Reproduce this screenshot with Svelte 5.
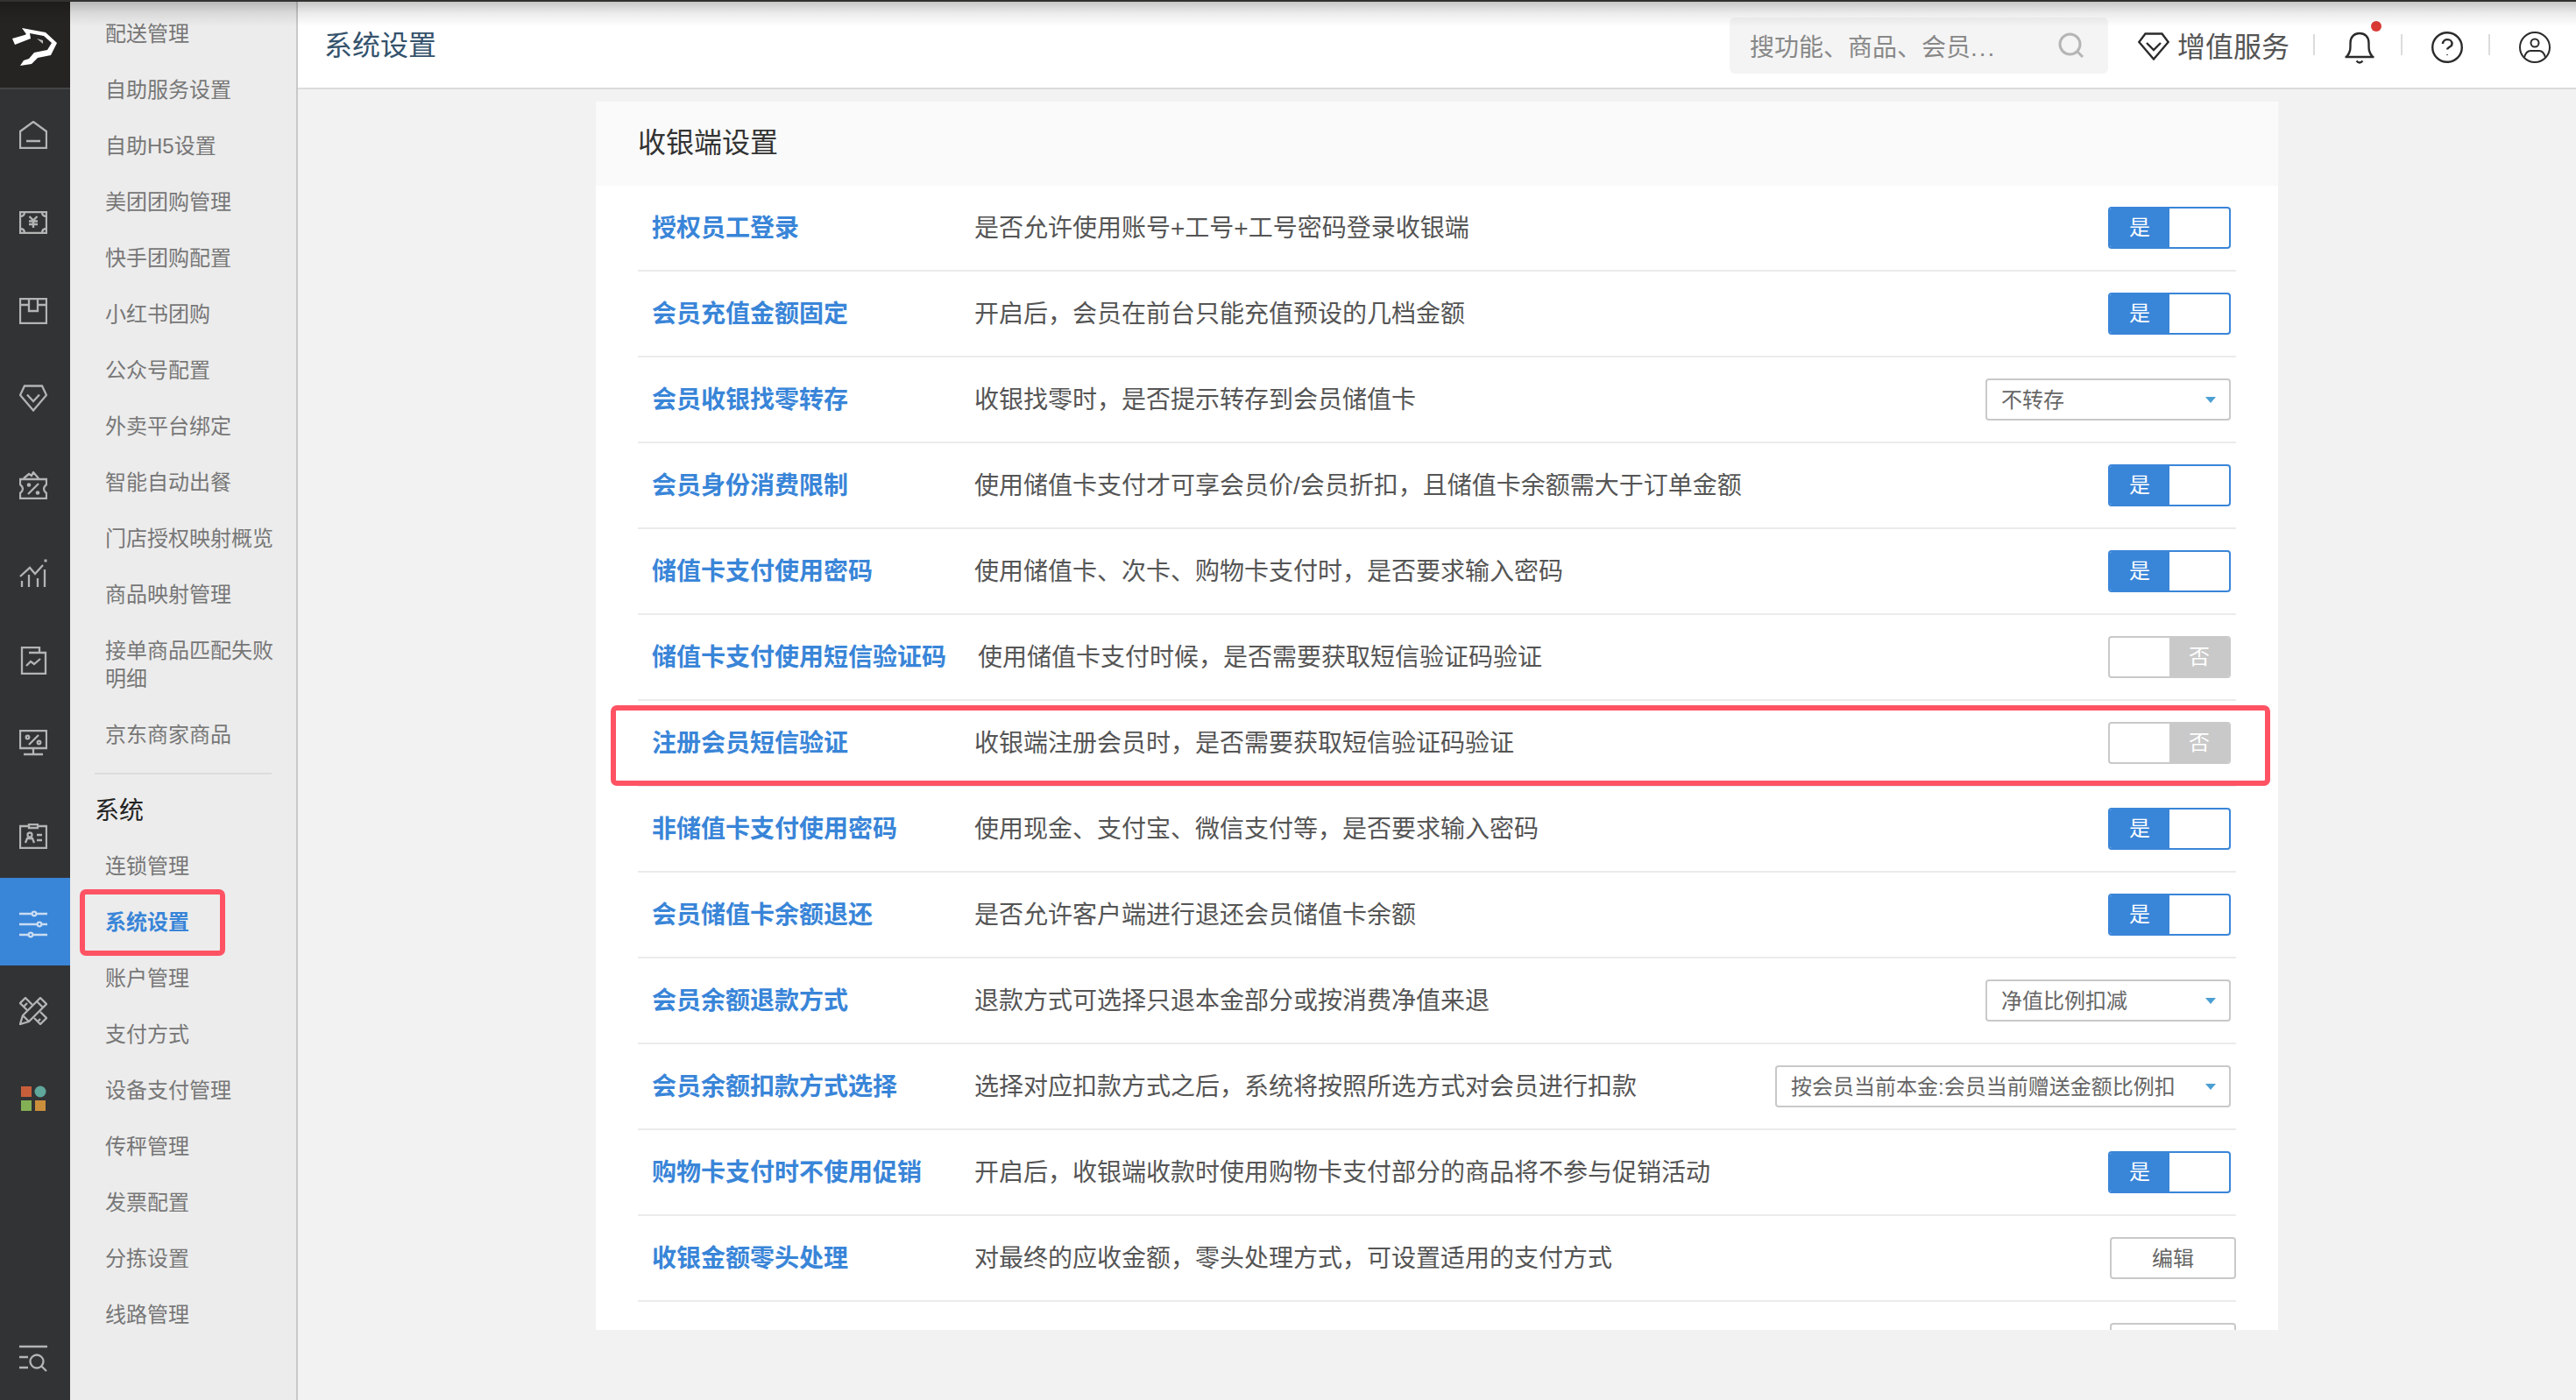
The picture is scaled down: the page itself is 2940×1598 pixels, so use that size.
<script lang="ts">
  type Row = {
    title: string;
    desc: string;
    type: "switch" | "select" | "button";
    on?: boolean;
    value?: string;
    wide?: boolean;
    marked?: boolean;
  };

  let menuTop = [
    "配送管理",
    "自助服务设置",
    "自助H5设置",
    "美团团购管理",
    "快手团购配置",
    "小红书团购",
    "公众号配置",
    "外卖平台绑定",
    "智能自动出餐",
    "门店授权映射概览",
    "商品映射管理",
    "接单商品匹配失败明细",
    "京东商家商品",
  ];

  let menuSystem = [
    "连锁管理",
    "系统设置",
    "账户管理",
    "支付方式",
    "设备支付管理",
    "传秤管理",
    "发票配置",
    "分拣设置",
    "线路管理",
  ];

  let active = "系统设置";

  let rows: Row[] = [
    { title: "授权员工登录", desc: "是否允许使用账号+工号+工号密码登录收银端", type: "switch", on: true },
    { title: "会员充值金额固定", desc: "开启后，会员在前台只能充值预设的几档金额", type: "switch", on: true },
    { title: "会员收银找零转存", desc: "收银找零时，是否提示转存到会员储值卡", type: "select", value: "不转存" },
    { title: "会员身份消费限制", desc: "使用储值卡支付才可享会员价/会员折扣，且储值卡余额需大于订单金额", type: "switch", on: true },
    { title: "储值卡支付使用密码", desc: "使用储值卡、次卡、购物卡支付时，是否要求输入密码", type: "switch", on: true },
    { title: "储值卡支付使用短信验证码", desc: "使用储值卡支付时候，是否需要获取短信验证码验证", type: "switch", on: false },
    { title: "注册会员短信验证", desc: "收银端注册会员时，是否需要获取短信验证码验证", type: "switch", on: false, marked: true },
    { title: "非储值卡支付使用密码", desc: "使用现金、支付宝、微信支付等，是否要求输入密码", type: "switch", on: true },
    { title: "会员储值卡余额退还", desc: "是否允许客户端进行退还会员储值卡余额", type: "switch", on: true },
    { title: "会员余额退款方式", desc: "退款方式可选择只退本金部分或按消费净值来退", type: "select", value: "净值比例扣减" },
    { title: "会员余额扣款方式选择", desc: "选择对应扣款方式之后，系统将按照所选方式对会员进行扣款", type: "select", value: "按会员当前本金:会员当前赠送金额比例扣", wide: true },
    { title: "购物卡支付时不使用促销", desc: "开启后，收银端收款时使用购物卡支付部分的商品将不参与促销活动", type: "switch", on: true },
    { title: "收银金额零头处理", desc: "对最终的应收金额，零头处理方式，可设置适用的支付方式", type: "button", value: "编辑" },
    { title: "", desc: "", type: "button", value: "" },
  ];

  function toggle(i: number) {
    rows[i].on = !rows[i].on;
    rows = rows;
  }
</script>

<div class="page">
  <nav class="rail">
    <div class="logo">
      <svg width="52" height="44" viewBox="0 0 52 44">
        <path
          d="M0 12 L14 8 L16 7 L11 0 L38 5 L51 17 L44 31 L29 34 L22 41 L9 43 L13 37 L19 35 L25 28 L40 25 L45 17 L36 9 L20 6 L21 12 L3 19 Z"
          fill="#fff"
        />
        <path d="M28 12 L35 14 L35 18 Z" fill="#bbb" />
      </svg>
    </div>
    <div class="icons">
      <svg width="32" height="32" viewBox="0 0 32 32" style:margin-top="36px">
        <path d="M1 12 L16 1 L31 12 V31 H1 Z M8 23 H24" />
      </svg>
      <svg width="32" height="26" viewBox="0 0 32 26" style:margin-top="71px">
        <path d="M1 1 H31 V25 H1 Z M1 6 Q6 6 6 1 M26 1 Q26 6 31 6 M1 20 Q6 20 6 25 M26 25 Q26 20 31 20" />
        <path d="M11.500 6 L16 10.500 L20.500 6 M16 10.500 V19 M11 11.500 H21 M11 15 H21" />
      </svg>
      <svg width="32" height="30" viewBox="0 0 32 30" style:margin-top="73px">
        <path d="M1 1 H31 V29 H1 Z M1 8 H11 M21 8 H31 M11 1 V15 H21 V1" />
      </svg>
      <svg width="32" height="31" viewBox="0 0 32 31" style:margin-top="69px">
        <path d="M6 1.500 H26 L31 12 L16 29.500 L1 12 Z M9 11.500 L16 19 L23 11.500" />
      </svg>
      <svg width="32" height="32" viewBox="0 0 32 32" style:margin-top="68px">
        <path d="M1 9 H31 V15 Q25 20 31 25 V31 H1 V25 Q7 20 1 15 Z M5 8 L11 3 L14 5 L16 1 L22 8 M10 26 L22 14" />
        <circle cx="11" cy="15.5" r="1.2" />
        <circle cx="21" cy="24.5" r="1.2" />
      </svg>
      <svg width="32" height="32" viewBox="0 0 32 32" style:margin-top="68px">
        <path d="M1 20 L12 10 L18 17 L27 7 M3 32 V25 M11 32 V18 M21 32 V22 M29 32 V12" />
        <rect x="28.5" y="0.5" width="3" height="3" fill="#b3b4b4" stroke="none" />
      </svg>
      <svg width="32" height="32" viewBox="0 0 32 32" style:margin-top="68px">
        <path d="M3 1 H23 V7 H30 V31 H3 Z M11 7 H24 M8 22 L13 17 L17 20 L24 14" />
      </svg>
      <svg width="32" height="30" viewBox="0 0 32 30" style:margin-top="63px">
        <path d="M1 1 H31 V21 H1 Z M16 21 V27 M5 28 H27 M11 17 L22 6" />
        <circle cx="9.5" cy="8.5" r="1.8" />
        <circle cx="22.5" cy="14.500" r="1.8" />
      </svg>
      <svg width="32" height="29" viewBox="0 0 32 29" style:margin-top="77px">
        <path d="M11 3 H1 V28 H31 V3 H21 M11 1 H21 V5 H11 Z M20 13 H26 M20 19 H26" />
        <circle cx="12" cy="13" r="2.5" />
        <path d="M7 22 L9 17 H15 L17 22" />
      </svg>
      <div class="current">
        <svg width="32" height="32" viewBox="0 0 32 32">
          <path d="M0 4 H14 M20 4 H32 M0 16 H20 M26 16 H32 M0 28 H10 M16 28 H32" />
          <circle cx="17" cy="4" r="2.3" />
          <circle cx="23" cy="16" r="2.3" />
          <circle cx="13" cy="28" r="2.3" />
        </svg>
      </div>
      <svg width="32" height="32" viewBox="0 0 32 32" style:margin-top="36px">
        <path d="M1 31 L4 21 L24 1 L31 8 L11 28 Z M20 5 L27 12 M4 21 L11 28" />
        <path d="M9 15 L1 7 L7 1 L15 9 M5 11 L9 7 M17 24 L24 31 L31 24 L24 17 M21 28 L24 25" />
      </svg>
      <svg class="apps" width="32" height="32" viewBox="0 0 32 32" style:margin-top="68px">
        <rect x="2" y="2" width="12" height="12" fill="#c95f3a" />
        <circle cx="24" cy="8" r="6.5" fill="#5fa89b" />
        <rect x="2" y="18" width="12" height="12" fill="#84b055" />
        <rect x="18" y="18" width="12" height="12" fill="#cb8f3c" />
      </svg>
    </div>
    <svg class="find" width="32" height="32" viewBox="0 0 32 32">
      <path d="M0 3 H32 M0 15 H10 M0 27 H10 M25 25 L31 31" />
      <circle cx="20" cy="20" r="7.5" />
    </svg>
  </nav>

  <aside class="menu">
    {#each menuTop as item}
      <div class="item">{item}</div>
    {/each}
    <div class="line"></div>
    <div class="group">系统</div>
    {#each menuSystem as item}
      <div class="item" class:active={item === active}>{item}</div>
    {/each}
  </aside>

  <div class="main">
    <header>
      <div class="crumb">系统设置</div>
      <div class="search">
        <span>搜功能、商品、会员<span class="dots">...</span></span>
        <svg width="32" height="32" viewBox="0 0 32 32">
          <circle cx="14.5" cy="14.5" r="11.5" />
          <path d="M23 23 L29 29" />
        </svg>
      </div>
      <div class="service">
        <svg width="36" height="32" viewBox="0 0 36 32">
          <path d="M8.5 1.5 H27.500 L34.700 11 L18 30.500 L1.300 11 Z M10 12 L18 20 L26 12" />
        </svg>
        <span>增值服务</span>
      </div>
      <div class="tool bell">
        <svg width="36" height="38" viewBox="0 0 36 38">
          <path d="M1.500 30 H34.500 M3.500 29.500 C8 24 7.500 20 7.500 14 C7.500 7 12 3 18 3 C24 3 28.500 7 28.500 14 C28.500 20 28 24 32.500 29.500 M14.500 34.500 Q18 38.500 21.500 34.500" />
        </svg>
        <i></i>
      </div>
      <div class="tool">
        <svg width="36" height="36" viewBox="0 0 36 36">
          <circle cx="18" cy="18" r="16.800" />
          <path d="M13 14 C13 7.500 23.500 7.500 23.500 14 C23.500 18 18.200 17.500 18 20.500" />
          <circle class="dot" cx="18" cy="26.500" r="0.8" />
        </svg>
      </div>
      <div class="tool user">
        <svg width="36" height="36" viewBox="0 0 36 36">
          <circle cx="18" cy="18" r="17" />
          <circle cx="18" cy="13" r="4.500" />
          <path d="M6 29.500 C7.500 24 10 22 13 22 H23 C26 22 28.500 24 30 29.500" />
        </svg>
      </div>
    </header>

    <section class="panel">
      <h3>收银端设置</h3>
      <div class="rows">
        {#each rows as row, i}
          <div class="row" class:marked={row.marked}>
            <span class="title">{row.title}</span>
            <span class="desc">{row.desc}</span>
            {#if row.type === "switch"}
              <button class="switch" class:off={!row.on} on:click={() => toggle(i)}>
                <span>{row.on ? "是" : "否"}</span>
              </button>
            {:else if row.type === "select"}
              <div class="select" class:wide={row.wide}>
                <span>{row.value}</span>
                <i></i>
              </div>
            {:else}
              <button class="edit">{row.value}</button>
            {/if}
          </div>
        {/each}
      </div>
    </section>
  </div>
  <div class="shade"></div>
</div>

<style>
  :global(body) {
    background: #f2f2f2;
  }
  .page {
    position: relative;
    display: flex;
    width: 100%;
    height: 100vh;
    overflow: hidden;
    background: #f2f2f2;
    color: #555;
    font-family: "Liberation Sans", "Noto Sans CJK SC", sans-serif;
    font-size: 28px;
  }
  svg {
    display: block;
    flex: none;
    fill: none;
    stroke: #b3b4b4;
    stroke-width: 2.3;
  }
  /* browser edge and the shadow it throws on the page */
  .shade {
    position: absolute;
    top: 0;
    left: 0;
    width: 100%;
    height: 30px;
    box-sizing: border-box;
    border-top: 2px solid #333231;
    background: linear-gradient(rgba(0, 0, 0, 0.24), rgba(0, 0, 0, 0.08) 50%, rgba(0, 0, 0, 0));
    background-origin: border-box;
    pointer-events: none;
  }

  .rail {
    display: flex;
    flex-direction: column;
    flex: none;
    width: 80px;
    background: #323335;
  }
  .logo {
    height: 102px;
    padding: 32px 0 0 14px;
    box-sizing: border-box;
    background: #252422;
    border-bottom: 2px solid #434548;
  }
  .logo svg {
    stroke: none;
  }
  .icons > svg {
    margin-left: 22px;
  }
  .current {
    height: 100px;
    margin-top: 33px;
    padding: 37px 0 0 22px;
    box-sizing: border-box;
    background: #3985d8;
  }
  .current svg {
    stroke: #c9dcf2;
  }
  .apps {
    stroke: none;
  }
  .find {
    margin: auto 0 32px 22px;
  }

  .menu {
    flex: none;
    width: 260px;
    box-sizing: border-box;
    padding: 7px 28px 0 28px;
    background: #ececec;
    border-right: 2px solid #c9c9c9;
    color: #777;
    font-size: 24px;
  }
  .item {
    position: relative;
    margin-right: -4px;
    padding: 16px 0 16px 12px;
    line-height: 32px;
  }
  .item.active {
    color: #3985d8;
    font-weight: bold;
  }
  .item.active::after {
    content: "";
    position: absolute;
    left: -17px;
    top: -6px;
    width: 154px;
    height: 64px;
    border: 6px solid #ff5364;
    border-radius: 7px;
  }
  .line {
    height: 2px;
    margin: 11px 0 10px;
    background: #dcdcdc;
  }
  .group {
    height: 63px;
    line-height: 64px;
    color: #222;
    font-size: 28px;
  }

  .main {
    flex: 1;
    display: flex;
    flex-direction: column;
    align-items: center;
  }
  header {
    display: flex;
    align-items: center;
    align-self: stretch;
    height: 102px;
    box-sizing: border-box;
    padding: 4px 0 0 30px;
    background: #fff;
    border-bottom: 2px solid #dcdcdc;
  }
  .crumb {
    flex: 1;
    padding-bottom: 6px;
    color: #34526c;
    font-size: 32px;
  }
  .search {
    display: flex;
    align-items: center;
    justify-content: space-between;
    width: 432px;
    height: 64px;
    box-sizing: border-box;
    padding: 0 26px 0 23px;
    border-radius: 6px;
    background: #f4f4f4;
    color: #888;
  }
  .search svg {
    stroke: #b5b5b5;
    stroke-width: 3;
  }
  .dots {
    letter-spacing: 2px;
  }
  .service {
    display: flex;
    align-items: center;
    gap: 9px;
    width: 200px;
    margin-left: 34px;
    color: #555;
    font-size: 32px;
  }
  .service span {
    padding-bottom: 3px;
  }
  .service svg,
  .tool svg {
    stroke: #2b2b2b;
    stroke-width: 2.4;
  }
  .service svg {
    margin-top: 2px;
  }
  .tool {
    position: relative;
    display: flex;
    align-items: center;
    width: 65px;
    height: 24px;
    margin-top: -2px;
    padding-left: 33px;
    border-left: 2px solid #dcdcdc;
  }
  .tool svg {
    margin-top: 6px;
  }
  .tool.user svg {
    stroke-width: 2;
  }
  .tool .dot {
    fill: #2b2b2b;
    stroke: none;
  }
  .bell i {
    position: absolute;
    left: 64px;
    top: -15px;
    width: 12px;
    height: 12px;
    border-radius: 50%;
    background: #d93a33;
  }

  .panel {
    width: 1920px;
    height: 1402px;
    margin: 14px 0 0;
    overflow: hidden;
    background: #fff;
  }
  h3 {
    margin: 0;
    padding: 0 48px;
    height: 96px;
    line-height: 94px;
    background: #fafafa;
    color: #333;
    font-size: 32px;
    font-weight: normal;
  }
  .rows {
    padding: 0 48px;
  }
  .row {
    position: relative;
    display: flex;
    align-items: center;
    height: 96px;
    padding-left: 16px;
    border-bottom: 2px solid #ebebeb;
  }
  .row.marked::after {
    content: "";
    position: absolute;
    left: -31px;
    top: 5px;
    width: 1882px;
    height: 80px;
    border: 6px solid #ff5364;
    border-radius: 7px;
    pointer-events: none;
  }
  .title {
    min-width: 368px;
    padding: 0 36px 4px 0;
    box-sizing: border-box;
    color: #3985d8;
    font-weight: bold;
  }
  .desc {
    flex: 1;
    padding-bottom: 4px;
  }
  button {
    font-family: inherit;
    font-size: 24px;
    cursor: pointer;
  }
  .switch {
    display: flex;
    width: 140px;
    height: 48px;
    margin-right: 6px;
    padding: 0;
    overflow: hidden;
    background: #fff;
    border: 2px solid #3985d8;
    border-radius: 4px;
  }
  .switch span {
    width: 68px;
    line-height: 44px;
    background: #3985d8;
    color: #fff;
  }
  .switch.off {
    justify-content: flex-end;
    border-color: #c9c9c9;
  }
  .switch.off span {
    background: #c9c9c9;
  }
  .select {
    display: flex;
    align-items: center;
    justify-content: space-between;
    width: 280px;
    height: 48px;
    box-sizing: border-box;
    margin-right: 6px;
    padding: 0 15px 0 16px;
    border: 2px solid #c9c9c9;
    border-radius: 4px;
    color: #666;
    font-size: 24px;
    white-space: nowrap;
  }
  .select span {
    padding-bottom: 4px;
  }
  .select.wide {
    width: 520px;
  }
  .select i {
    border: 6px solid transparent;
    border-top: 7px solid #4b9fd2;
    border-bottom: 0;
  }
  .edit {
    width: 144px;
    height: 48px;
    padding: 0 0 4px;
    background: #fff;
    border: 2px solid #c9c9c9;
    border-radius: 4px;
    color: #666;
  }
</style>
